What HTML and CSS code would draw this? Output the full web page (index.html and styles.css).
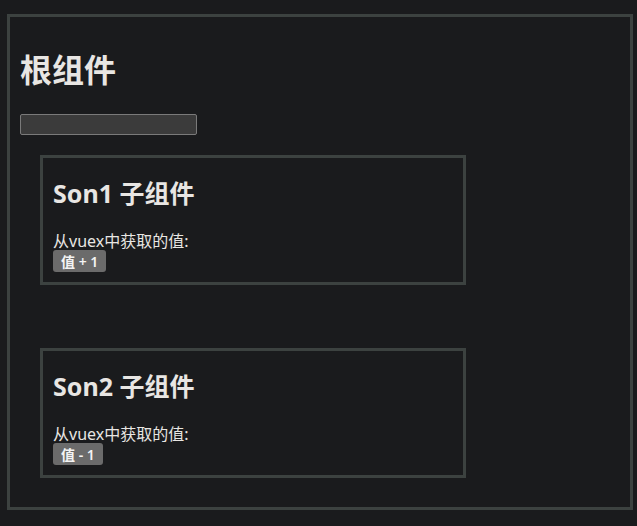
FILE: index.html
```html
<!DOCTYPE html>
<html lang="zh">
<head>
<meta charset="utf-8">
<title>根组件</title>
<link rel="stylesheet" href="styles.css">
</head>
<body>
<div class="app">
  <h1 class="title">根组件</h1>
  <input class="field" type="text">
  <div class="son son-first">
    <h2 class="son-title">Son1 子组件</h2>
    <div class="label">从vuex中获取的值:</div>
    <button class="btn">值 + 1</button>
  </div>
  <div class="son son-second">
    <h2 class="son-title">Son2 子组件</h2>
    <div class="label">从vuex中获取的值:</div>
    <button class="btn">值 - 1</button>
  </div>
</div>
</body>
</html>
```
FILE: styles.css
```css
html, body {
  background: #1a1b1d;
}
body {
  margin: 0;
  padding: 14px 4px 16px 7px;
  color: #e8e6e3;
  font-family: "Noto Sans", "Noto Sans CJK SC", sans-serif;
}
.app {
  border: 3px solid #3c4240;
  padding: 1px 10px 29px;
}
.title {
  font-size: 32px;
  font-weight: 700;
  margin: 34px 0 26px;
  line-height: 36px;
}
.field {
  display: block;
  width: 177px;
  height: 21px;
  box-sizing: border-box;
  background: #3b3b3b;
  border: 1px solid #7a7a7a;
  border-radius: 2px;
  padding: 0;
  margin: 0;
}
.son {
  width: 426px;
  box-sizing: border-box;
  border: 3px solid #3c4240;
  margin-left: 20px;
  padding: 0 10px 10px;
}
.son-first { margin-top: 20px; }
.son-second { margin-top: 63px; }
.son-title {
  font-size: 25px;
  font-weight: 700;
  line-height: 30px;
  margin: 20px 0 24px;
}
.label {
  font-size: 16px;
  line-height: 18px;
}
.btn {
  display: block;
  margin: 0;
  height: 22px;
  padding: 0 8px;
  background: #6b6b6b;
  color: #f4f4f4;
  border: 0;
  border-radius: 3px;
  font-family: "Noto Sans", "Noto Sans CJK SC", sans-serif;
  font-size: 14px;
  font-weight: 600;
}
```
